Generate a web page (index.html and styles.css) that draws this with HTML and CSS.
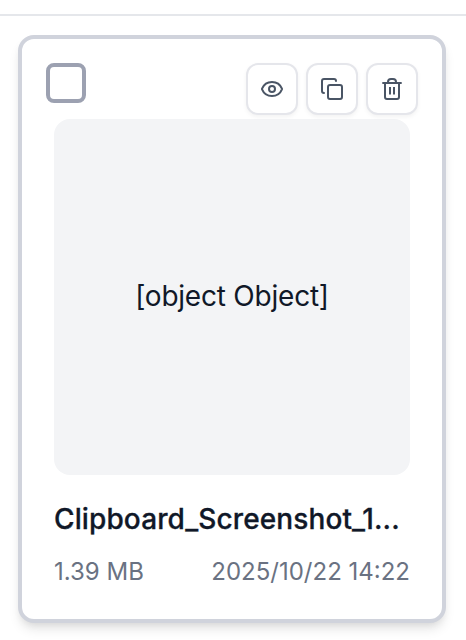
FILE: index.html
```html
<!DOCTYPE html>
<html lang="en">
<head>
<meta charset="utf-8">
<title>Files</title>
<link rel="stylesheet" href="styles.css">
</head>
<body>
<main class="list">
  <article class="card">
    <header class="toolbar">
      <span class="checkbox" role="checkbox" aria-checked="false"></span>
      <div class="actions">
        <button class="action"><svg class="icon" viewBox="0 0 24 24"><path d="M2.062 12.348a1 1 0 0 1 0-.696 10.75 10.75 0 0 1 19.876 0 1 1 0 0 1 0 .696 10.75 10.75 0 0 1-19.876 0"/><circle cx="12" cy="12" r="3"/></svg></button>
        <button class="action"><svg class="icon" viewBox="0 0 24 24"><rect x="8" y="8" width="14" height="14" rx="2"/><path d="M4 16c-1.1 0-2-.9-2-2V4c0-1.1.9-2 2-2h10c1.1 0 2 .9 2 2"/></svg></button>
        <button class="action"><svg class="icon icon-trash" viewBox="0 0 24 24"><path d="M2.3 6h19.4M19 6v14a2 2 0 0 1-2 2H7a2 2 0 0 1-2-2V6M8 6V5c0-1.700 1.300-3 3-3h2c1.700 0 3 1.300 3 3v1M10 10v7.500M14 10v7.500"/></svg></button>
      </div>
    </header>
    <div class="preview"><span class="placeholder">[object Object]</span></div>
    <h3 class="name">Clipboard_Screenshot_1...</h3>
    <div class="meta"><span class="size">1.39 MB</span><span class="date">2025/10/22 14:22</span></div>
  </article>
</main>
</body>
</html>
```
FILE: styles.css
```css
* {
  box-sizing: border-box;
}

body {
  min-height: 640px;
  margin: 0;
  padding-top: 14px;
  background: #fff;
  color: #101828;
  font-family: Inter, "Liberation Sans", sans-serif;
}

.list {
  padding: 19px 20px 0 18px;
  border-top: 2px solid #e5e7eb;
}

.card {
  height: 588px;
  padding: 24px;
  border: 4px solid #d0d3dc;
  border-radius: 16px;
  background: #fff;
  box-shadow: 0 8px 12px -2px rgb(0 0 0 / 10%), 0 4px 8px -4px rgb(0 0 0 / 10%);
}

.toolbar {
  display: flex;
  align-items: flex-start;
  justify-content: space-between;
  height: 56px;
}

.checkbox {
  width: 40px;
  height: 40px;
  border: 4px solid #9ca1b1;
  border-radius: 8px;
}

.actions {
  display: flex;
  gap: 8px;
}

.action {
  display: flex;
  align-items: center;
  justify-content: center;
  width: 52px;
  height: 52px;
  padding: 0;
  border: 2px solid #e5e6eb;
  border-radius: 12px;
  background: #fff;
  color: #4a5565;
  box-shadow: 0 2px 4px rgb(0 0 0 / 5%);
}

.icon {
  width: 24px;
  height: 24px;
  fill: none;
  stroke: currentColor;
  stroke-width: 2;
  stroke-linecap: round;
  stroke-linejoin: round;
}

.icon-trash {
  stroke-linecap: butt;
}

.preview {
  display: flex;
  align-items: center;
  justify-content: center;
  height: 356px;
  margin: 0 8px;
  padding-bottom: 2px;
  border-radius: 16px;
  background: #f3f4f6;
}

.placeholder {
  font-size: 28px;
  line-height: 40px;
  letter-spacing: -0.22px;
  white-space: nowrap;
}

.name {
  margin: 24px 8px 17px;
  font-size: 28px;
  font-weight: 500;
  line-height: 40px;
  letter-spacing: 0.12px;
  white-space: nowrap;
  -webkit-text-stroke: 0.3px currentColor;
}

.meta {
  display: flex;
  justify-content: space-between;
  margin: 0 8px;
  color: #6a7282;
  font-size: 24px;
  line-height: 32px;
  white-space: nowrap;
}
```
